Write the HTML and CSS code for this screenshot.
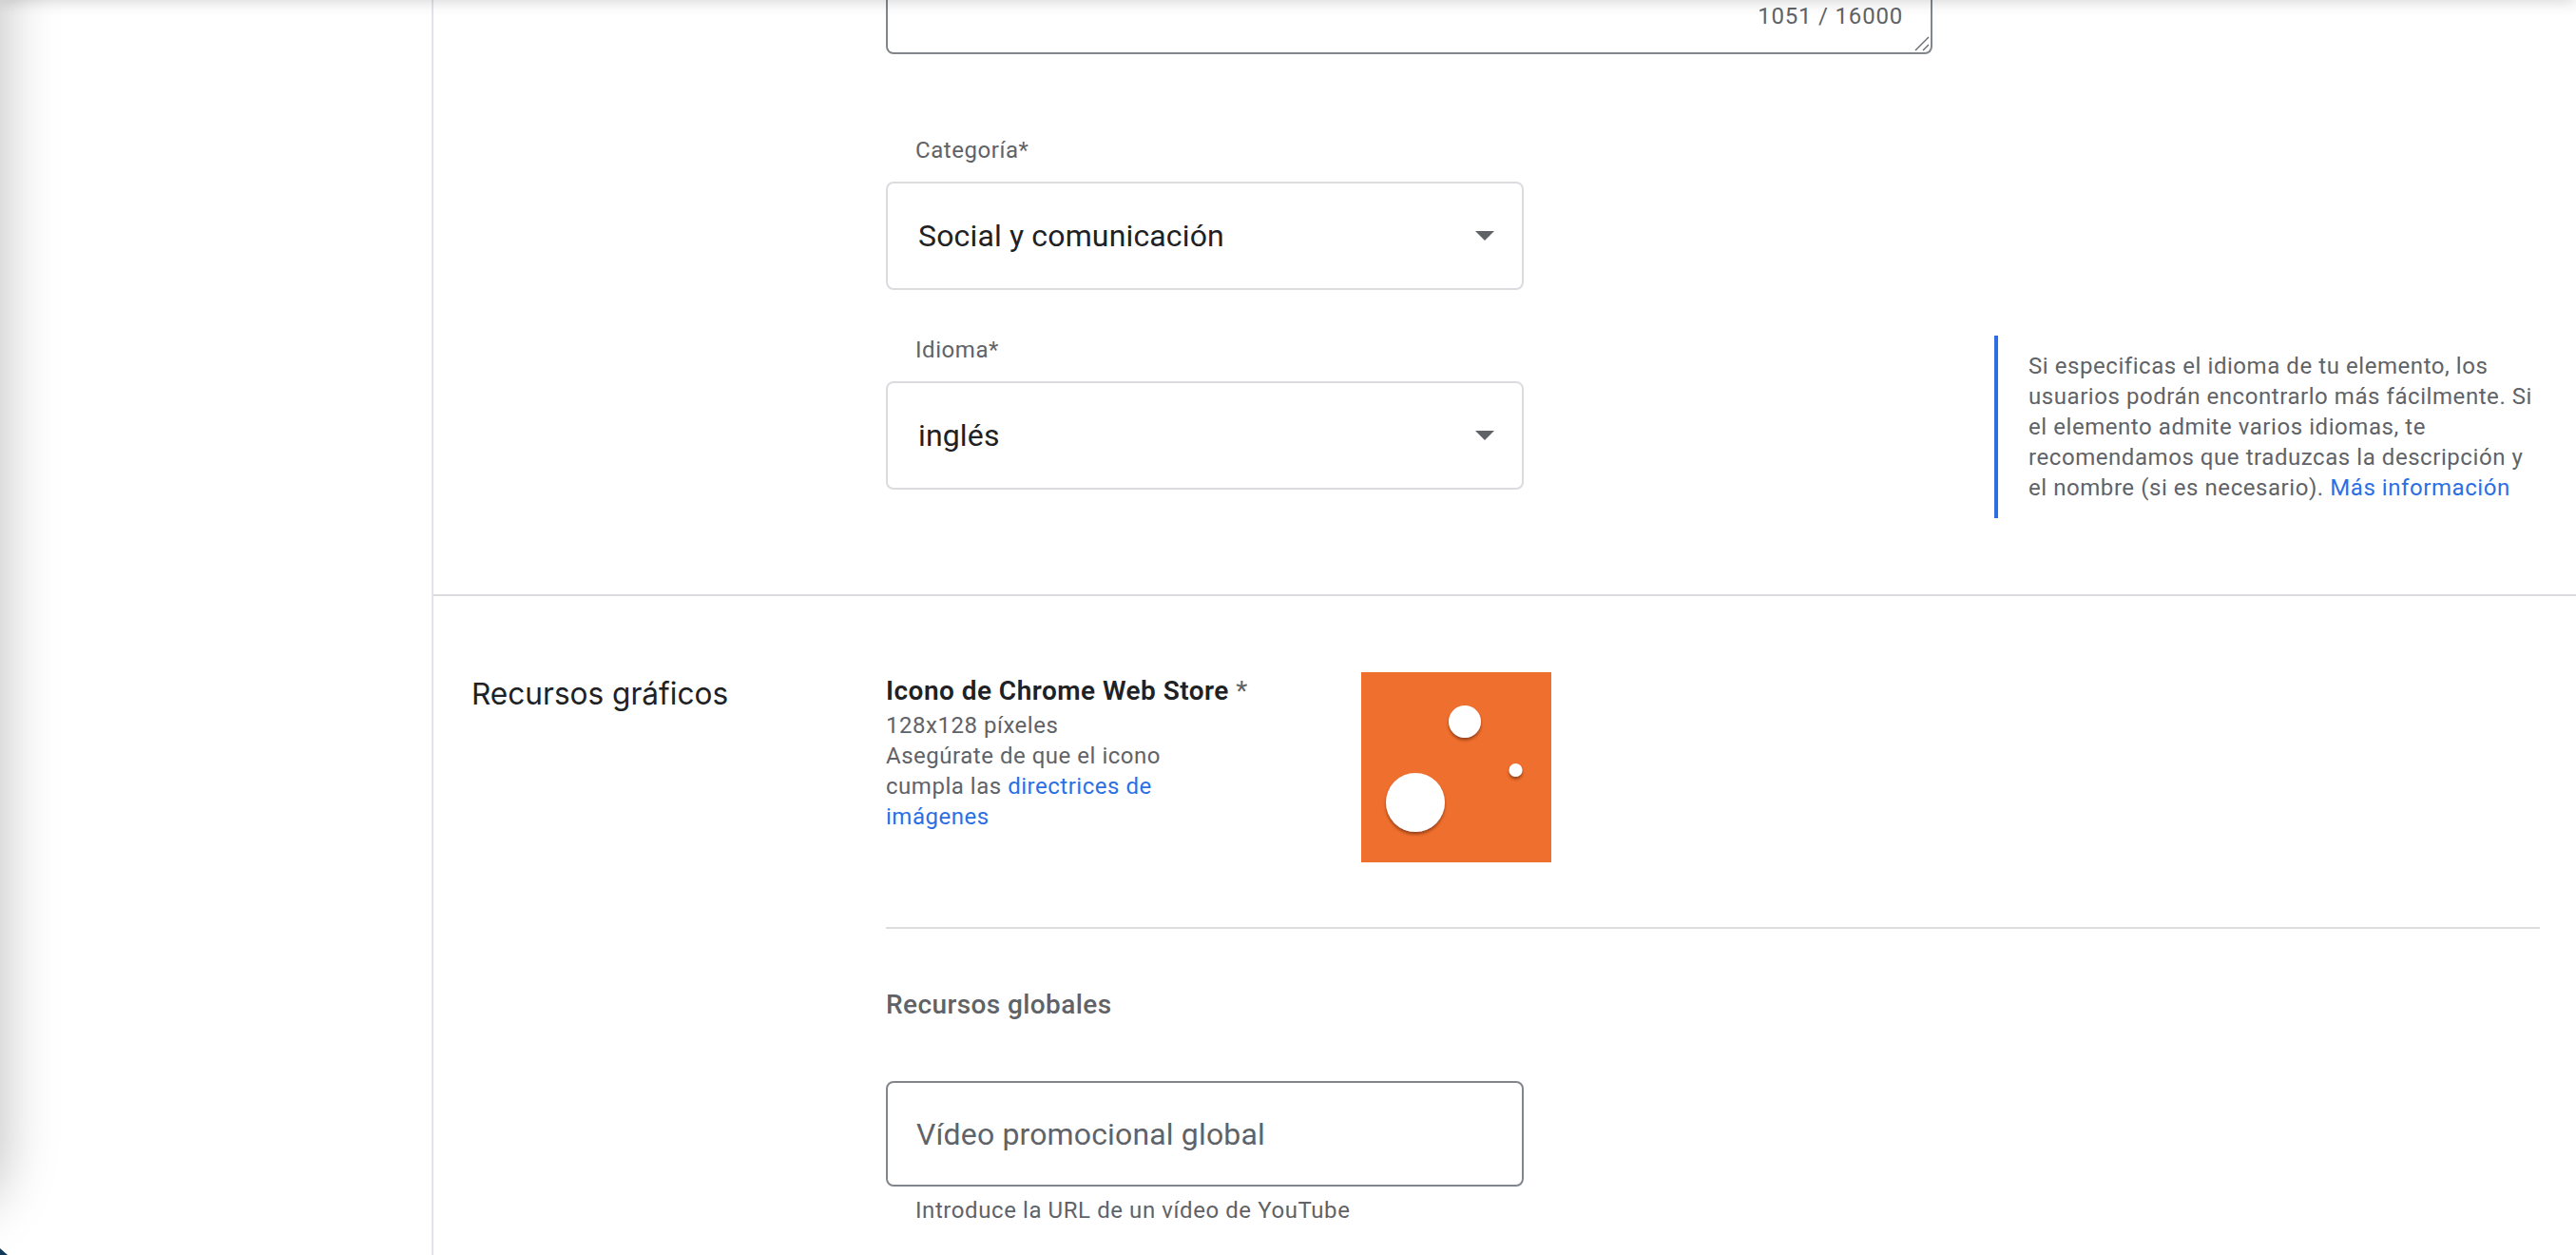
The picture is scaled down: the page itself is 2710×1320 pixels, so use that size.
FILE: index.html
```html
<!DOCTYPE html>
<html lang="es">
<head>
<meta charset="utf-8">
<title>Recursos gráficos</title>
<link rel="stylesheet" href="styles.css">
</head>
<body>
<div class="app">
  <aside class="sidebar"></aside>
  <main class="main">
    <section class="section section-form">
      <div class="textarea">
        <div class="counter">1051 / 16000</div>
        <svg class="resize" width="16" height="16" viewBox="0 0 16 16"><path d="M1 15 15 1M9 15l6-6" fill="none" stroke="#666a6e" stroke-width="1.4"/></svg>
      </div>
      <div class="field field-first">
        <div class="field-main">
          <label class="label">Categoría*</label>
          <div class="select"><span>Social y comunicación</span><i class="arrow"></i></div>
        </div>
      </div>
      <div class="field">
        <div class="field-main">
          <label class="label">Idioma*</label>
          <div class="select"><span>inglés</span><i class="arrow"></i></div>
        </div>
        <p class="tip">Si especificas el idioma de tu elemento, los usuarios podrán encontrarlo más fácilmente. Si el elemento admite varios idiomas, te recomendamos que traduzcas la descripción y el nombre (si es necesario). <a href="#">Más información</a></p>
      </div>
    </section>
    <section class="section section-assets">
      <h2 class="section-title">Recursos gráficos</h2>
      <div class="assets">
        <div class="icon-row">
          <div class="icon-text">
            <h3 class="icon-title">Icono de Chrome Web Store <span class="star">*</span></h3>
            <p class="icon-desc">128x128 píxeles<br>Asegúrate de que el icono cumpla las <a href="#">directrices de imágenes</a></p>
          </div>
          <svg class="store-icon" width="200" height="200" viewBox="0 0 200 200">
            <defs><filter id="drop" x="-50%" y="-50%" width="200%" height="200%"><feGaussianBlur in="SourceGraphic" stdDeviation="0.7" result="soft"/><feDropShadow in="soft" dx="0" dy="2.5" stdDeviation="1.8" flood-color="#7a3310" flood-opacity="0.75"/></filter></defs>
            <rect width="200" height="200" fill="#ef6f2e"/>
            <g fill="#fff" filter="url(#drop)">
              <circle cx="57" cy="137" r="31"/>
              <circle cx="109" cy="52" r="17"/>
              <circle cx="162.500" cy="103" r="7"/>
            </g>
          </svg>
        </div>
        <hr class="divider">
        <h3 class="sub-title">Recursos globales</h3>
        <div class="input">Vídeo promocional global</div>
        <div class="helper">Introduce la URL de un vídeo de YouTube</div>
      </div>
    </section>
  </main>
</div>
<div class="shade-top"></div>
<div class="shade-left"></div>
<div class="corner"></div>
</body>
</html>
```

FILE: styles.css
```css
* { box-sizing: border-box; }
html, body { margin: 0; height: 100%; background: #fff; overflow: hidden; }
body { font-family: Roboto, "Liberation Sans", sans-serif; color: #5f6368; }
a { color: #2b6fe3; text-decoration: none; }

.app { display: flex; height: 1320px; overflow: hidden; }
.sidebar { flex: 0 0 456px; border-right: 2px solid #e3e3e9; }
.main { flex: 1; min-width: 0; }

.section-form { padding-left: 476px; height: 627px; border-bottom: 2px solid #dcdce0; }
.textarea { position: relative; width: 1101px; height: 57px; border: 2px solid #80868b; border-top: 0; border-radius: 0 0 8px 8px; text-align: right; padding-right: 29px; }
.counter { font-size: 24px; line-height: 34px; letter-spacing: 0.8px; }
.resize { position: absolute; right: 1px; bottom: 1px; }

.field { display: flex; align-items: flex-start; margin-top: 47px; }
.field-first { margin-top: 85px; }
.field-main { width: 671px; flex: none; }
.label { display: block; padding-left: 31px; font-size: 24px; line-height: 32px; letter-spacing: 0.55px; margin-bottom: 17px; }
.select { display: flex; align-items: center; justify-content: space-between; height: 114px; padding: 0 29px 0 32px; border: 2px solid #dadce0; border-radius: 8px; font-size: 32px; color: #202124; letter-spacing: 0.15px; }
.arrow { width: 0; height: 0; border-left: 10px solid transparent; border-right: 10px solid transparent; border-top: 10px solid #5f6368; }

.tip { flex: none; width: 574px; margin: 1px 0 0 495px; padding: 16px 0 16px 32px; border-left: 4px solid #2b6fe3; font-size: 24px; line-height: 32px; letter-spacing: 0.56px; }

.section-assets { display: flex; align-items: flex-start; }
.section-title { flex: 0 0 476px; margin: 83px 0 0; padding-left: 40px; font-family: Inter, Roboto, sans-serif; font-size: 31.6px; line-height: 40px; font-weight: 400; color: #202124; }
.assets { width: 1740px; padding-top: 80px; }

.icon-row { display: flex; }
.icon-text { flex: 0 0 500px; }
.icon-title { margin: 0; font-size: 28px; line-height: 40px; font-weight: 600; color: #202124; letter-spacing: 0.46px; }
.star { font-weight: 400; color: #5f6368; }
.icon-desc { margin: 0; max-width: 340px; font-size: 24px; line-height: 32px; letter-spacing: 0.52px; }
.store-icon { display: block; flex: none; }

.divider { margin: 68px 0 0; border: 0; height: 2px; background: #dcdcdc; }
.sub-title { margin: 60px 0 0; font-size: 28px; line-height: 40px; font-weight: 500; color: #5f6368; letter-spacing: 0.4px; }
.input { margin: 60px 0 0; width: 671px; height: 111px; padding: 0 30px; display: flex; align-items: center; border: 2px solid #80868b; border-radius: 8px; font-size: 32px; letter-spacing: 0.15px; }
.helper { margin: 9px 0 0 31px; font-size: 24px; line-height: 32px; letter-spacing: 0.58px; }

.shade-top { position: fixed; left: 0; right: 0; top: -20px; height: 20px; box-shadow: 0 0 18px rgba(0, 0, 0, 0.2); pointer-events: none; }
.shade-left { position: fixed; left: -60px; top: -100px; width: 60px; height: 1375px; border-radius: 0 0 60px 0; box-shadow: 0 0 60px rgba(0, 0, 0, 0.28); pointer-events: none; }
.corner { position: fixed; left: 0; bottom: 0; width: 8px; height: 7px; background: #12385a; clip-path: polygon(0 0, 100% 100%, 0 100%); }
```
